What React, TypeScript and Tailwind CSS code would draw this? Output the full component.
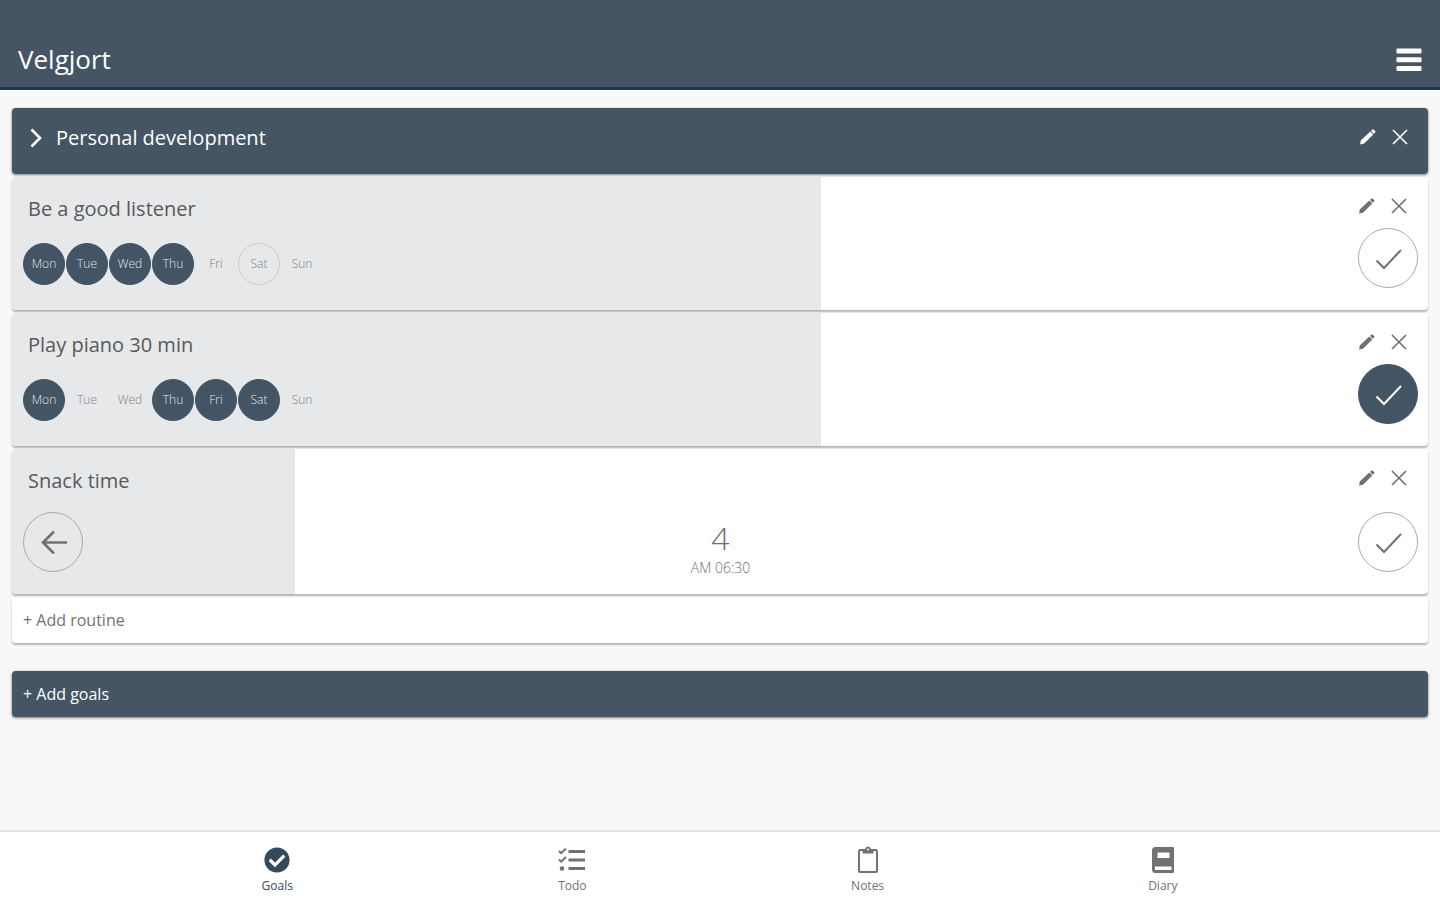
import { ReactNode } from 'react';
import clsx from 'clsx';
import { FaCheckCircle } from 'react-icons/fa';

const DAYS = ['Mon', 'Tue', 'Wed', 'Thu', 'Fri', 'Sat', 'Sun'];
const TODAY = 'Sat';

type Routine = {
  title: string;
  progress: number;
  checked?: boolean;
  days?: string[];
  count?: number;
  time?: string;
};

const routines: Routine[] = [
  { title: 'Be a good listener', progress: 4 / 7, days: ['Mon', 'Tue', 'Wed', 'Thu'] },
  { title: 'Play piano 30 min', progress: 4 / 7, days: ['Mon', 'Thu', 'Fri', 'Sat'], checked: true },
  { title: 'Snack time', progress: 0.2, count: 4, time: 'AM 06:30' },
];

function MenuIcon() {
  return (
    <svg viewBox="0 0 26 24" className="h-6 w-[26px]" fill="currentColor">
      <rect x="0.500" y="0.500" width="25" height="5" rx="1" />
      <rect x="0.500" y="9.300" width="25" height="5" rx="1" />
      <rect x="0.500" y="18" width="25" height="5" rx="1" />
    </svg>
  );
}

function ChevronIcon() {
  return (
    <svg viewBox="0 0 12 20" className="h-5 w-3" fill="none" stroke="currentColor" strokeWidth="2.6">
      <path d="M1.5 1.5 10 10l-8.500 8.500" />
    </svg>
  );
}

function PencilIcon() {
  return (
    <svg viewBox="0 0 20 20" className="h-5 w-5" fill="currentColor">
      <path d="M2 17.500l1-4.200L12.300 4.600l3 3L6.200 16.500z" />
      <path d="M13 3.900l1.200-1.200q.8-.7 1.600 0l1.300 1.300q.7.800 0 1.600l-1.200 1.200z" />
    </svg>
  );
}

function CloseIcon() {
  return (
    <svg viewBox="0 0 16 16" className="h-4 w-4" fill="none" stroke="currentColor" strokeWidth="1.600">
      <path d="M1 1l14 14M15 1L1 15" />
    </svg>
  );
}

function CheckIcon() {
  return (
    <svg viewBox="0 0 28 24" className="h-6 w-7" fill="none" stroke="currentColor" strokeWidth="2">
      <path d="M2.500 14.500l7.500 7.500L27 4" />
    </svg>
  );
}

function ArrowLeftIcon() {
  return (
    <svg viewBox="0 0 28 24" className="h-6 w-7" fill="none" stroke="currentColor" strokeWidth="2.600">
      <path d="M28 12.500H5M15 1.500L4 12.500l11 11" />
    </svg>
  );
}

function TasksIcon() {
  return (
    <svg viewBox="0 0 28 28" className="h-7 w-7" fill="none" stroke="currentColor">
      <path d="M10.500 5.500H27M10.500 14H27M10.500 22.500H27" strokeWidth="2.800" />
      <path d="M1 5l2.200 2.200L8 2.500M1 13.500l2.200 2.200L8 11" strokeWidth="2" />
      <circle cx="4" cy="22.500" r="2.300" fill="currentColor" stroke="none" />
    </svg>
  );
}

function ClipboardIcon() {
  return (
    <svg viewBox="0 0 22 28" className="h-7 w-[22px]" fill="none" stroke="currentColor" strokeWidth="2">
      <path d="M6 4H3.200q-1.200 0-1.200 1.200v19.600q0 1.200 1.200 1.200h15.600q1.200 0 1.200-1.200V5.200q0-1.200-1.200-1.200H16" />
      <path d="M6 3.500h2.500a2.500 2.500 0 0 1 5 0H16V7H6z" fill="currentColor" strokeWidth="1" />
      <circle cx="11" cy="3.500" r="1" fill="white" stroke="none" />
    </svg>
  );
}

function BookIcon() {
  return (
    <svg viewBox="0 0 24 28" className="h-7 w-6" fill="currentColor">
      <path
        fillRule="evenodd"
        d="M4.500 1H22q1 0 1 1v24q0 1-1 1H4.500Q1 27 1 23.500v-19Q1 1 4.500 1zM6.500 6.500v5.500h12V6.500zM4 20.500v3.500h16.500v-3.500z"
      />
    </svg>
  );
}

function RowActions({ name }: { name: string }) {
  return (
    <div className="flex items-center gap-[14px]">
      <button type="button" aria-label={`Edit ${name}`}>
        <PencilIcon />
      </button>
      <button type="button" aria-label={`Delete ${name}`}>
        <CloseIcon />
      </button>
    </div>
  );
}

function RoundButton({ label, filled, children }: { label: string; filled?: boolean; children: ReactNode }) {
  return (
    <button
      type="button"
      aria-label={label}
      className={clsx(
        'flex h-[60px] w-[60px] items-center justify-center rounded-full border',
        filled ? 'border-[#435464] bg-[#435464] text-white' : 'border-[#a9abac] text-[#707274]',
      )}
    >
      {children}
    </button>
  );
}

function DayList({ done }: { done: string[] }) {
  return (
    <ul className="flex gap-px">
      {DAYS.map((day) => (
        <li
          key={day}
          className={clsx(
            'flex h-[42px] w-[42px] items-center justify-center rounded-full border text-xs font-light',
            done.includes(day)
              ? 'border-[#435464] bg-[#435464] text-[#e4e7ea]'
              : day === TODAY
                ? 'border-[#cbcdce] text-[#808284]'
                : 'border-transparent text-[#808284]',
          )}
        >
          {day}
        </li>
      ))}
    </ul>
  );
}

function RoutineCard({ routine }: { routine: Routine }) {
  return (
    <li className="relative overflow-hidden rounded bg-white text-[#6d6f71] shadow-[0_2px_2px_rgba(0,0,0,0.28)]">
      <div className="absolute inset-y-0 left-0 bg-[#e6e8ea]" style={{ width: `${routine.progress * 100}%` }} />
      <div className={clsx('relative', routine.days ? 'h-[133px]' : 'h-[145px]')}>
        <div className="flex items-start justify-between pt-4 pr-[21px] pl-4">
          <h3 className="text-xl leading-8 text-[#58595b]">{routine.title}</h3>
          <div className="pt-[3px]">
            <RowActions name={routine.title} />
          </div>
        </div>
        {routine.days ? (
          <div className="flex items-start justify-between pr-[10px] pl-[11px]">
            <div className="pt-[18px]">
              <DayList done={routine.days} />
            </div>
            <div className="pt-[3px]">
              <RoundButton label={`Mark ${routine.title} as done`} filled={routine.checked}>
                <CheckIcon />
              </RoundButton>
            </div>
          </div>
        ) : (
          <div className="flex items-start justify-between pt-[15px] pr-[10px] pl-[11px]">
            <RoundButton label="Undo">
              <ArrowLeftIcon />
            </RoundButton>
            <div className="pt-2 text-center font-light">
              <p className="text-[32px] leading-9">{routine.count}</p>
              <p className="text-sm leading-6">{routine.time}</p>
            </div>
            <RoundButton label={`Mark ${routine.title} as done`}>
              <CheckIcon />
            </RoundButton>
          </div>
        )}
      </div>
    </li>
  );
}

function NavItem({ label, active, children }: { label: string; active?: boolean; children: ReactNode }) {
  return (
    <a
      href={`#${label.toLowerCase()}`}
      className={clsx('flex flex-1 flex-col items-center pt-[14px]', active ? 'text-[#34495c]' : 'text-[#707274]')}
    >
      <span className="flex h-7 items-center">{children}</span>
      <span className="pt-1 text-xs leading-4">{label}</span>
    </a>
  );
}

export default function App() {
  return (
    <div className="flex min-h-screen flex-col bg-[#f8f8f8] font-['Open_Sans','Noto_Sans',sans-serif]">
      <header className="flex items-center justify-between border-b-[3px] border-[#1b3750] bg-[#455564] px-[18px] pt-9 pb-1 text-white">
        <h1 className="text-[26px] leading-[47px]">Velgjort</h1>
        <button type="button" aria-label="Menu">
          <MenuIcon />
        </button>
      </header>

      <main className="flex-1 border-t-2 border-white px-3 pt-4">
        <section>
          <div className="flex h-[66px] items-start justify-between rounded bg-[#455564] pt-[14px] pr-5 pl-[18px] text-white shadow-[0_1px_3px_rgba(0,0,0,0.5)]">
            <div className="flex items-center gap-[14px]">
              <button type="button" aria-label="Toggle Personal development">
                <ChevronIcon />
              </button>
              <h2 className="text-xl leading-8">Personal development</h2>
            </div>
            <div className="pt-[5px]">
              <RowActions name="Personal development" />
            </div>
          </div>
          <ul className="flex flex-col gap-[3px] pt-[3px]">
            {routines.map((routine) => (
              <RoutineCard key={routine.title} routine={routine} />
            ))}
          </ul>
          <button
            type="button"
            className="mt-[3px] block h-[46px] w-full rounded bg-white px-[11px] text-left text-base text-[#707274] shadow-[0_2px_2px_rgba(0,0,0,0.28)]"
          >
            + Add routine
          </button>
        </section>
        <button
          type="button"
          className="mt-7 block h-[46px] w-full rounded bg-[#455564] px-[11px] text-left text-base text-white shadow-[0_1px_3px_rgba(0,0,0,0.5)]"
        >
          + Add goals
        </button>
      </main>

      <nav className="flex h-[70px] border-t-2 border-[#e2e2e2] bg-white px-[9%]">
        <NavItem label="Goals" active>
          <FaCheckCircle className="h-[26px] w-[26px]" />
        </NavItem>
        <NavItem label="Todo">
          <TasksIcon />
        </NavItem>
        <NavItem label="Notes">
          <ClipboardIcon />
        </NavItem>
        <NavItem label="Diary">
          <BookIcon />
        </NavItem>
      </nav>
    </div>
  );
}
